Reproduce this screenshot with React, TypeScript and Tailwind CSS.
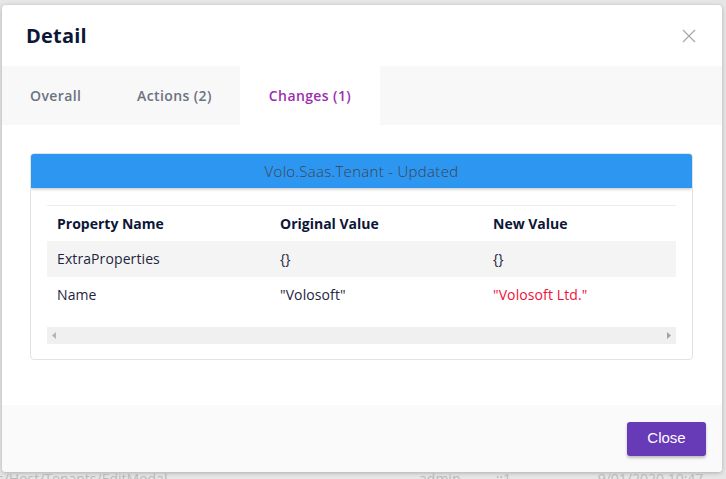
import React from 'react';

const FONT = { fontFamily: '"Open Sans", "Noto Sans", sans-serif' };

const ROWS = [
  { name: 'ExtraProperties', original: '{}', next: '{}', changed: false },
  { name: 'Name', original: '"Volosoft"', next: '"Volosoft Ltd."', changed: true },
];

export default function App() {
  return (
    <div className="w-[726px] h-[479px] bg-[#e6e6e6] overflow-hidden" style={FONT}>
      {/* Modal */}
      <div className="ml-[2px] mt-[5px] w-[720px] h-[467px] bg-white rounded-[4px] shadow-[0_1px_4px_rgba(0,0,0,0.25)] flex flex-col overflow-hidden">
        {/* Header */}
        <div className="h-[61px] flex items-center justify-between pl-[24px] pr-[26px]">
          <h2 className="text-[20px] font-bold text-[#0d1637] tracking-[0.2px]">Detail</h2>
          <svg width="14" height="14" viewBox="0 0 14 14" className="text-[#a8a8a8]">
            <path d="M1 1L13 13M13 1L1 13" stroke="currentColor" strokeWidth="1.2" />
          </svg>
        </div>

        {/* Tabs */}
        <div className="h-[59px] bg-[#f8f8f8] flex items-stretch text-[14px] font-semibold tracking-[0.4px]">
          <div className="w-[107px] flex items-center pl-[28px] text-[#6b7280]">Overall</div>
          <div className="w-[131px] flex items-center pl-[28px] text-[#6b7280]">Actions (2)</div>
          <div className="w-[140px] bg-white flex items-center justify-center text-[#9b2fae]">Changes (1)</div>
        </div>

        {/* Body */}
        <div className="flex-1 pt-[28px] px-[28px]">
          <div className="w-[663px] border border-[#e2e2e2] rounded-[4px] overflow-hidden">
            <div className="h-[34px] bg-[#2d96f0] shadow-[0_1px_3px_rgba(0,0,0,0.25)] flex items-center justify-center text-[15px] font-light tracking-[0.3px] text-[#3d4451]">
              Volo.Saas.Tenant - Updated
            </div>
            <div className="px-[16px] pt-[17px] pb-[15px]">
              <div className="border-t border-[#ececec]">
                <div className="grid grid-cols-[223px_213px_1fr] h-[35px] items-center pl-[10px] pb-[1px] text-[14px] font-bold text-[#0d1637]">
                  <span>Property Name</span>
                  <span>Original Value</span>
                  <span>New Value</span>
                </div>
                {ROWS.map((r, i) => (
                  <div
                    key={r.name}
                    className={`grid grid-cols-[223px_213px_1fr] h-[36px] items-center pl-[10px] pb-[1px] text-[14px] tracking-[0.1px] text-[#1f2540] ${
                      i % 2 === 0 ? 'bg-[#f4f4f4]' : ''
                    }`}
                  >
                    <span>{r.name}</span>
                    <span>{r.original}</span>
                    <span className={r.changed ? 'text-[#f0103a]' : ''}>{r.next}</span>
                  </div>
                ))}
                {/* scrollbar */}
                <div className="mt-[14px] h-[17px] bg-[#f0f0f0] flex items-center justify-between px-[5px]">
                  <svg width="4" height="7" viewBox="0 0 4 7"><path d="M4 0L0 3.5L4 7Z" fill="#b5b5b5" /></svg>
                  <svg width="4" height="7" viewBox="0 0 4 7"><path d="M0 0L4 3.5L0 7Z" fill="#a3a3a3" /></svg>
                </div>
              </div>
            </div>
          </div>
        </div>

        {/* Footer */}
        <div className="h-[67px] bg-[#fafafa] flex items-center justify-end pr-[16px]">
          <button
            className="w-[79px] h-[34px] bg-[#673ab7] text-white text-[15px] rounded-[3px] shadow-[0_2px_3px_rgba(0,0,0,0.25)]"
            style={{ fontFamily: '"Liberation Sans", Arial, sans-serif' }}
          >
            Close
          </button>
        </div>
      </div>

      {/* page behind the modal */}
      <div className="flex text-[14px] text-[#b9b9b9] leading-[16px] -mt-[1px]">
        <span className="w-[430px] -ml-[3px]">s/Host/Tenants/EditModal</span>
        <span className="w-[78px]">admin</span>
        <span className="w-[104px]">::1</span>
        <span>9/01/2020 10:47 AM</span>
      </div>
    </div>
  );
}
